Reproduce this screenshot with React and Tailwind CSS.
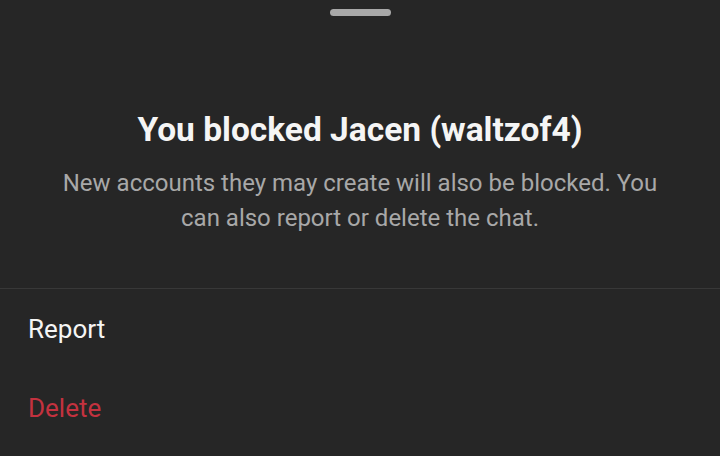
export default function App() {
  return (
    <div className="w-[720px] h-[456px] bg-[#262626] flex flex-col overflow-hidden" style={{ fontFamily: 'Roboto, "Noto Sans", sans-serif' }}>
      <div className="flex justify-center pt-[9px]">
        <div className="w-[61px] h-[7px] rounded-full bg-[#a8a8a8]" />
      </div>
      <div className="flex flex-col items-center mt-[94px]">
        <h1 className="text-[33.5px] leading-[40px] font-bold text-[#f5f5f5] whitespace-nowrap">You blocked Jacen (waltzof4)</h1>
        <p className="mt-[16px] w-[620px] text-center text-[24px] leading-[35px] text-[#a8a8a8]">
          New accounts they may create will also be blocked. You can also report or delete the chat.
        </p>
      </div>
      <div className="mt-[52px] h-px bg-[#383838]" />
      <div className="flex flex-col pt-[1px]">
        <div className="h-[79px] flex items-center px-[28px] text-[26px] text-[#f5f5f5]">Report</div>
        <div className="h-[79px] flex items-center px-[28px] text-[26px] text-[#c4323f]">Delete</div>
      </div>
    </div>
  );
}
